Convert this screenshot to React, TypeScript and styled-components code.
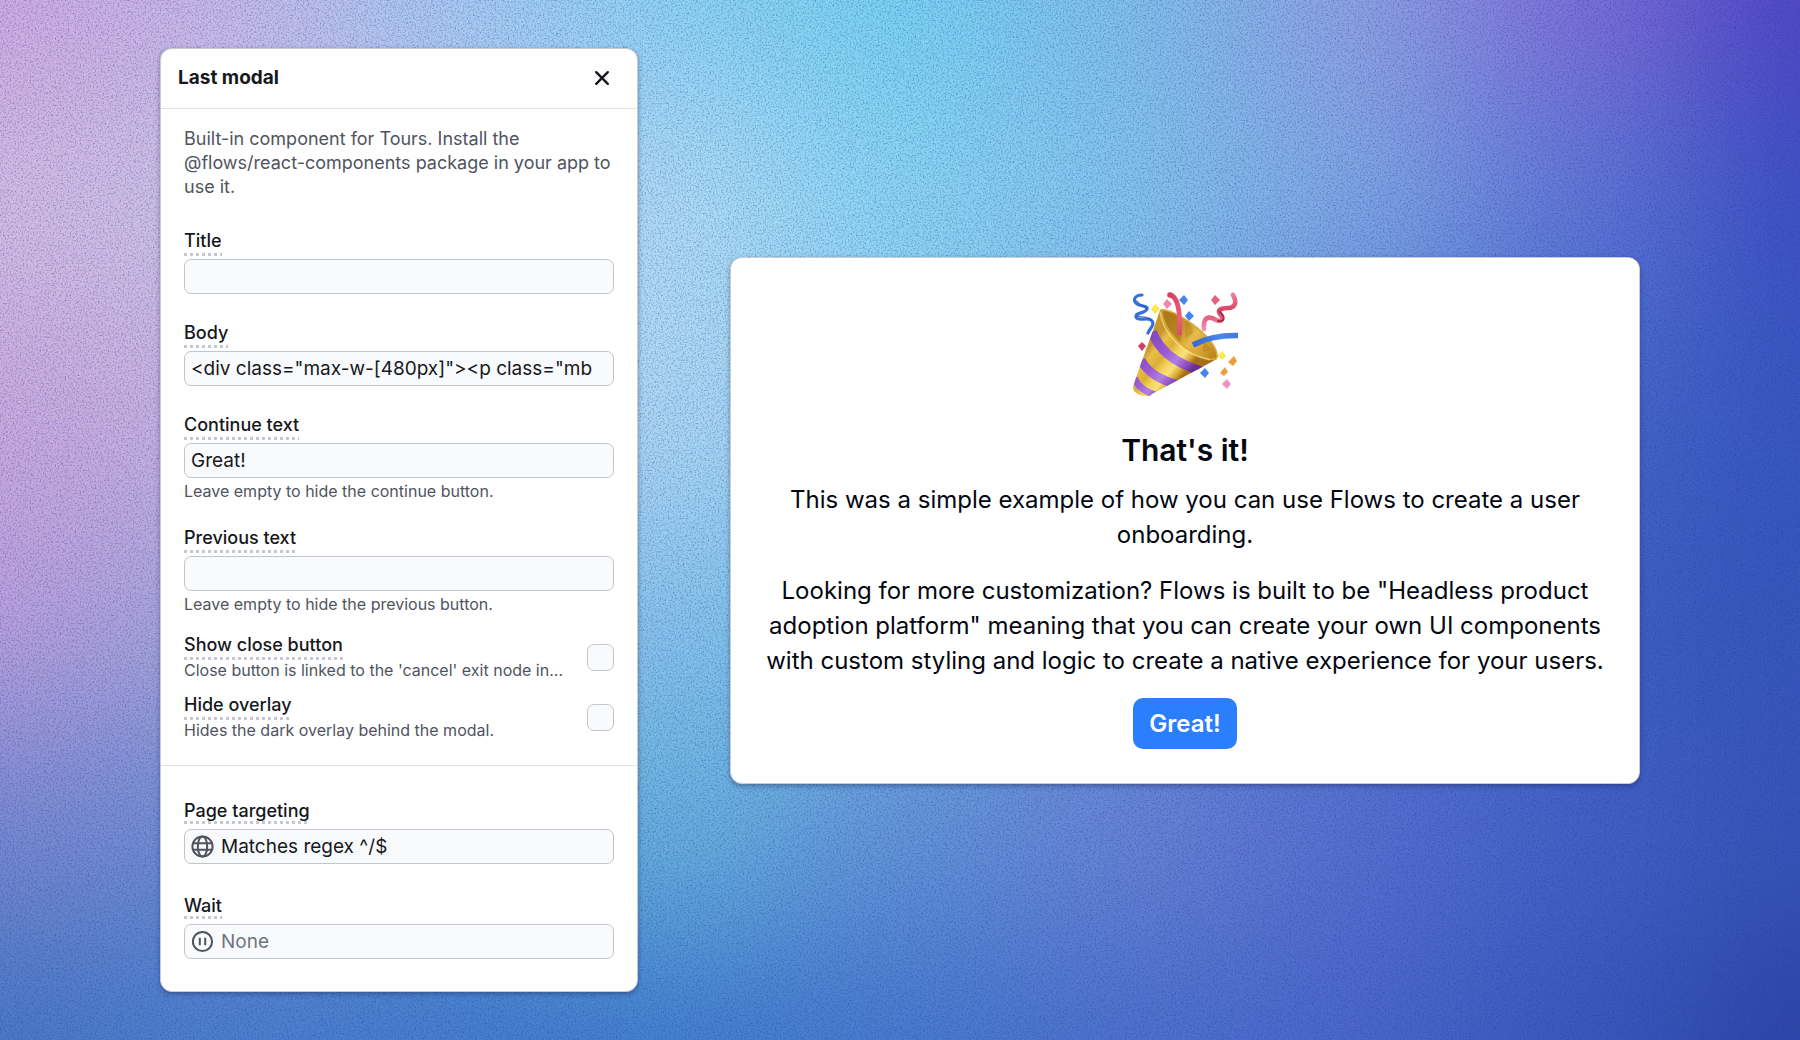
import React, { useId, useState } from "react";
import styled, { createGlobalStyle } from "styled-components";

const GlobalStyle = createGlobalStyle`
  *, *::before, *::after { box-sizing: border-box; }
  html, body, #root { min-height: 100vh; }
  body { margin: 0; font-family: Inter, "Liberation Sans", sans-serif; color: #16181d; }
  button, input { font: inherit; color: inherit; }
  p, h1, h2 { margin: 0; }
`;

const Page = styled.div`
  display: grid;
  min-height: 100vh;
`;

const Backdrop = styled.svg`
  grid-area: 1 / 1;
  width: 100%;
  height: 100%;
  min-height: 0;
  contain: size;
`;

const Stage = styled.main`
  grid-area: 1 / 1;
  z-index: 1;
  display: grid;
  grid-template-columns: 478px minmax(0, 910px);
  justify-content: center;
  align-items: center;
  gap: 92px;
  padding: 48px 160px;
`;

const Card = styled.section`
  background: #fff;
  border: 1px solid #c8ccd4;
  border-radius: 12px;
  box-shadow: 0 2px 5px rgba(20, 30, 70, 0.4);
`;

const Header = styled.header`
  display: flex;
  align-items: center;
  justify-content: space-between;
  height: 60px;
  padding: 0 20px 1px 17px;
  border-bottom: 1px solid #dfe2e8;
`;

const PanelTitle = styled.h2`
  font-size: 19px;
  line-height: 24px;
  font-weight: 700;
`;

const CloseButton = styled.button`
  display: grid;
  place-items: center;
  width: 30px;
  height: 30px;
  padding: 0;
  border: 0;
  border-radius: 6px;
  background: none;
  cursor: pointer;
`;

const Settings = styled.div`
  padding: 18px 23px 24px;
`;

const Targeting = styled.div`
  display: flex;
  flex-direction: column;
  gap: 28px;
  padding: 34px 23px 29px;
  border-top: 1px solid #dfe2e8;
`;

const Description = styled.p`
  padding-bottom: 30px;
  font-size: 18px;
  line-height: 24px;
  color: #50545f;
`;

const FieldList = styled.div`
  display: flex;
  flex-direction: column;
  gap: 24px;
`;

const ToggleList = styled.div`
  display: flex;
  flex-direction: column;
  gap: 12px;
  margin-top: 18px;
`;

const FieldRoot = styled.div`
  display: flex;
  flex-direction: column;
  align-items: stretch;
`;

const Label = styled.label<{ $tight?: boolean }>`
  align-self: flex-start;
  padding-bottom: 3px;
  font-size: 18px;
  line-height: ${(p) => (p.$tight ? 21 : 24)}px;
  font-weight: 500;
  background: repeating-linear-gradient(90deg, #c4c8d1 0 3px, transparent 3px 6px) left bottom / 100% 3px no-repeat;
`;

const Control = styled.div<{ $tight?: boolean }>`
  display: flex;
  align-items: center;
  gap: 7px;
  height: 35px;
  margin: ${(p) => (p.$tight ? 5 : 3)}px 0 3px;
  padding: 0 6px;
  border: 1px solid #c1c5ce;
  border-radius: 7px;
  background: #f9fafc;
  color: #50545f;
  &:focus-within { border-color: #2b7fff; }
`;

const TextInput = styled.input`
  flex: 1;
  min-width: 0;
  padding: 0;
  border: 0;
  outline: 0;
  background: none;
  color: #16181d;
  font-size: 19px;
  line-height: 24px;
  &::placeholder { color: #6f7480; opacity: 1; }
`;

const Help = styled.p`
  font-size: 16px;
  line-height: 21px;
  color: #50545f;
`;

const ToggleRow = styled.div`
  display: flex;
  align-items: center;
  justify-content: space-between;
  gap: 8px;
`;

const ToggleText = styled.div`
  display: flex;
  flex-direction: column;
  min-width: 0;
`;

const Checkbox = styled.input`
  appearance: none;
  flex: none;
  width: 27px;
  height: 27px;
  margin: 0;
  border: 1px solid #c1c5ce;
  border-radius: 7px;
  background: #f9fafc;
  &:checked { background: #2b7fff; border-color: #2b7fff; }
`;

const Modal = styled(Card)`
  display: flex;
  flex-direction: column;
  align-items: center;
  padding: 34px 32px;
  color: #030712;
  text-align: center;
`;

const ModalTitle = styled.h1`
  margin-top: 34px;
  font-size: 30px;
  line-height: 38px;
  font-weight: 600;
`;

const ModalText = styled.p<{ $gap: number }>`
  margin-top: ${(p) => p.$gap}px;
  font-size: 24px;
  line-height: 35px;
`;

const PrimaryButton = styled.button`
  height: 51px;
  margin-top: 20px;
  padding: 0 16px;
  border: 0;
  border-radius: 10px;
  background: #2b7fff;
  color: #fff;
  font-size: 24px;
  line-height: 35px;
  font-weight: 600;
  cursor: pointer;
`;

/* Colour mesh: each row holds the tones from left to right. */
const mesh: string[][] = [
  ["#d0a8e0", "#c8b8e6", "#a8c8f0", "#8cd2f2", "#78d2f0", "#80c0ea", "#90a2e2", "#8070d8", "#5046c4"],
  ["#d4bee2", "#ccc2e4", "#b4ccee", "#b2dcf4", "#8cd6f4", "#84c6ec", "#80a8e4", "#6078d6", "#3c50c2"],
  ["#cca8dc", "#c8b4e0", "#acc4e8", "#b0daf4", "#90c8ec", "#80b0e4", "#6488d6", "#4868cc", "#3856be"],
  ["#bca0dc", "#a4a4d8", "#90b4e4", "#88c6ec", "#74b4e0", "#648cd8", "#5474d0", "#4060c6", "#3656bc"],
  ["#7888d0", "#708cd2", "#60a0d4", "#68b4de", "#6494d8", "#6a84d4", "#5870d0", "#4462c6", "#3854b8"],
  ["#4876c2", "#4a7ecc", "#447acc", "#427ccc", "#4678cc", "#4c70cc", "#4a66c8", "#3a58be", "#2c44a4"],
];

function GradientBackdrop() {
  const cols = mesh[0].length;
  const rows = mesh.length;
  const w = 1800 / (cols - 1);
  const h = 1040 / (rows - 1);
  return (
    <Backdrop viewBox="0 0 1800 1040" preserveAspectRatio="none" aria-hidden="true">
      <defs>
        <filter id="soften" filterUnits="userSpaceOnUse" x="-400" y="-400" width="2600" height="1840" colorInterpolationFilters="sRGB">
          <feGaussianBlur stdDeviation="80" />
        </filter>
        <filter id="grain" filterUnits="userSpaceOnUse" x="0" y="0" width="1800" height="1040" colorInterpolationFilters="sRGB">
          <feTurbulence type="fractalNoise" baseFrequency="0.6" numOctaves="2" seed="4" />
          <feColorMatrix values="0 0 0 0 0.1  0 0 0 0 0.22  0 0 0 0 0.6  2.4 0 0 0 -1.1" />
        </filter>
      </defs>
      <g filter="url(#soften)">
        {mesh.map((row, r) =>
          row.map((fill, c) => {
            const left = c === 0 ? -400 : (c - 0.5) * w;
            const right = c === cols - 1 ? 2200 : (c + 0.5) * w;
            const top = r === 0 ? -400 : (r - 0.5) * h;
            const bottom = r === rows - 1 ? 1440 : (r + 0.5) * h;
            return <rect key={`${r}-${c}`} x={left} y={top} width={right - left + 1} height={bottom - top + 1} fill={fill} />;
          })
        )}
      </g>
      <rect width="1800" height="1040" filter="url(#grain)" opacity="0.4" />
    </Backdrop>
  );
}

const CloseIcon = () => (
  <svg width="16" height="16" viewBox="0 0 16 16" fill="none" stroke="#16181d" strokeWidth="2.4" strokeLinecap="round" aria-hidden="true">
    <path d="M2.2 2.2 13.8 13.8M13.8 2.2 2.2 13.8" />
  </svg>
);

const GlobeIcon = () => (
  <svg width="23" height="23" viewBox="0 0 23 23" fill="none" stroke="currentColor" strokeWidth="2" aria-hidden="true">
    <circle cx="11.5" cy="11.5" r="10.1" />
    <ellipse cx="11.5" cy="11.5" rx="4.7" ry="10.1" />
    <path d="M2.2 8.2h18.6M2.2 14.8h18.6" />
  </svg>
);

const PauseIcon = () => (
  <svg width="23" height="23" viewBox="0 0 23 23" fill="none" stroke="currentColor" strokeWidth="2" aria-hidden="true">
    <circle cx="11.5" cy="11.5" r="9.6" />
    <path d="M8.8 7.8v7.4M14.2 7.8v7.4" />
  </svg>
);

const PartyPopper = () => (
  <svg width="105" height="105" viewBox="0 0 105 105" role="img" aria-label="Party popper">
    <defs>
      <linearGradient id="gold" x1="12" y1="60" x2="46" y2="88" gradientUnits="userSpaceOnUse">
        <stop offset="0" stopColor="#c8962c" />
        <stop offset="0.15" stopColor="#e8bf48" />
        <stop offset="0.38" stopColor="#dcae38" />
        <stop offset="0.55" stopColor="#f2d25c" />
        <stop offset="0.72" stopColor="#f8e27a" />
        <stop offset="0.88" stopColor="#d8a836" />
        <stop offset="1" stopColor="#a47018" />
      </linearGradient>
      <linearGradient id="inside" x1="32" y1="24" x2="84" y2="62" gradientUnits="userSpaceOnUse">
        <stop offset="0" stopColor="#b5821c" />
        <stop offset="0.35" stopColor="#c99428" />
        <stop offset="0.55" stopColor="#e6bc4c" />
        <stop offset="0.75" stopColor="#d6a434" />
        <stop offset="1" stopColor="#b9841c" />
      </linearGradient>
      <linearGradient id="violet" x1="10" y1="56" x2="48" y2="90" gradientUnits="userSpaceOnUse">
        <stop offset="0" stopColor="#8648c4" />
        <stop offset="0.4" stopColor="#9a5cd4" />
        <stop offset="0.65" stopColor="#b080e2" />
        <stop offset="0.85" stopColor="#8e50c4" />
        <stop offset="1" stopColor="#6a2f94" />
      </linearGradient>
      <linearGradient id="rose" x1="0" y1="0" x2="0" y2="1">
        <stop offset="0" stopColor="#f07c96" />
        <stop offset="0.45" stopColor="#d84464" />
        <stop offset="1" stopColor="#f490a8" />
      </linearGradient>
      <linearGradient id="stem" x1="36" y1="0" x2="48" y2="44" gradientUnits="userSpaceOnUse">
        <stop offset="0" stopColor="#d8405f" />
        <stop offset="0.6" stopColor="#ec5f7e" />
        <stop offset="1" stopColor="#d8486a" />
      </linearGradient>
      <linearGradient id="azure" x1="60" y1="0" x2="105" y2="0" gradientUnits="userSpaceOnUse">
        <stop offset="0" stopColor="#3468cc" />
        <stop offset="0.6" stopColor="#4a84ee" />
        <stop offset="1" stopColor="#3e78e0" />
      </linearGradient>
      <clipPath id="cone">
        <path d="M27 18C20 40 8 70 0 95c0 6 8 10 15 9 2 0 3-1 4-2L84 67C70 40 40 20 27 18Z" />
      </clipPath>
    </defs>
    <path d="M27 18C20 40 8 70 0 95c0 6 8 10 15 9 2 0 3-1 4-2L84 67C70 40 40 20 27 18Z" fill="url(#gold)" />
    <g clipPath="url(#cone)" fill="none" stroke="url(#violet)">
      <path d="M19 40c7 16 18 30 52 40" strokeWidth="9.5" />
      <path d="M8 68c6 12 18 20 38 25" strokeWidth="9" />
      <path d="M1 86c4 9 11 14 24 18" strokeWidth="7" />
    </g>
    <path d="M28 18c13-2 52 25 56 44 1 5-2 6-8 5C50 60 30 38 28 18Z" fill="url(#inside)" />
    <path d="M31 20c1 12 8 22 17 31l1-26c-6-4-12-6-18-5Z" fill="#8f6210" opacity="0.28" />
    <path d="M53 29c5 3 7 8 7 12l-8 6Zm18 20 8 9-10 2Z" fill="#a87818" opacity="0.35" />
    <path d="M28 18c13-2 52 25 56 44 1 5-2 6-8 5C50 60 30 38 28 18Z" fill="none" stroke="#d9aa38" strokeWidth="1.6" />
    <path d="M27 20c3 22 22 42 50 48" fill="none" stroke="#f8e38a" strokeWidth="1.2" opacity="0.8" />
    <path d="M9 3C2 3-1 8 4 12c4 3 11 1 10 5-2 5-12 3-11 8 2 5 10 0 15 3 5 4-1 8-3 13" fill="none" stroke="#3670e0" strokeWidth="3.2" strokeLinecap="round" />
    <path d="M4 9c3 5 8 5 10 8M4 24c5 2 10-1 14 4" fill="none" stroke="#2550a8" strokeWidth="1.4" strokeLinecap="round" opacity="0.7" />
    <path d="M37 3c7 1 11 15 9.500 40" fill="none" stroke="url(#stem)" strokeWidth="4.8" />
    <path d="M37 3h.1" stroke="#d8405f" strokeWidth="5.6" strokeLinecap="round" />
    <path d="M60 53c11-6 24-10 46-9.500" fill="none" stroke="url(#azure)" strokeWidth="5.6" />
    <path d="M100 3c5 8 1 13-5 13-7 0-11 2-8 6 4 4 2 9-4 6-8-5-13-2-12 9" fill="none" stroke="url(#rose)" strokeWidth="4.6" strokeLinecap="round" />
    <path d="M87 20c6 6 4 10-2 9" fill="none" stroke="#a82c48" strokeWidth="1.8" strokeLinecap="round" />
    <g fill="#4285ee">
      <path d="m51 3 4 5-4 5-5-5Z" />
      <path d="m56 19 5 5-5 5-4-5Z" />
      <path d="m72 76 4 5-4 5-5-5Z" />
    </g>
    <path d="m22 12 5 5-5 5-4-5Zm67 47 4 5-4 4-4-4Z" fill="#fbe84a" />
    <path d="m34 7 5 5-5 5-4-5Z" fill="#f08aac" />
    <path d="m82 3 5 5-5 5-4-5Z" fill="#e4607e" />
    <path d="m9 50 4 4-4 5-4-5Z" fill="#cf3f5c" />
    <path d="m101 64 3 5-4 5-5-4ZM92 75l3 5-4 4-4-3Z" fill="#ee9c40" />
    <path d="m94 87 4 5-4 5-5-5Z" fill="#f093c4" />
  </svg>
);

interface FieldProps {
  label: string;
  value?: string;
  placeholder?: string;
  help?: string;
  icon?: React.ReactNode;
  tight?: boolean;
}

function Field({ label, value = "", placeholder, help, icon, tight }: FieldProps) {
  const id = useId();
  const [text, setText] = useState(value);
  return (
    <FieldRoot>
      <Label htmlFor={id} $tight={tight}>{label}</Label>
      <Control $tight={tight}>
        {icon}
        <TextInput id={id} type="text" value={text} placeholder={placeholder} onChange={(e) => setText(e.target.value)} />
      </Control>
      {help && <Help>{help}</Help>}
    </FieldRoot>
  );
}

function Toggle({ label, help }: { label: string; help: string }) {
  const id = useId();
  return (
    <ToggleRow>
      <ToggleText>
        <Label htmlFor={id}>{label}</Label>
        <Help>{help}</Help>
      </ToggleText>
      <Checkbox id={id} type="checkbox" />
    </ToggleRow>
  );
}

export default function App() {
  return (
    <Page>
      <GlobalStyle />
      <GradientBackdrop />
      <Stage>
        <Card>
          <Header>
            <PanelTitle>Last modal</PanelTitle>
            <CloseButton type="button" aria-label="Close">
              <CloseIcon />
            </CloseButton>
          </Header>
          <Settings>
            <Description>
              Built-in component for Tours. Install the @flows/react-components package in your app to use it.
            </Description>
            <FieldList>
              <Field label="Title" />
              <Field label="Body" value={'<div class="max-w-[480px]"><p class="mb'} />
              <Field label="Continue text" value="Great!" help="Leave empty to hide the continue button." />
              <Field label="Previous text" help="Leave empty to hide the previous button." />
            </FieldList>
            <ToggleList>
              <Toggle label="Show close button" help="Close button is linked to the 'cancel' exit node in..." />
              <Toggle label="Hide overlay" help="Hides the dark overlay behind the modal." />
            </ToggleList>
          </Settings>
          <Targeting>
            <Field tight label="Page targeting" value="Matches regex ^/$" icon={<GlobeIcon />} />
            <Field tight label="Wait" placeholder="None" icon={<PauseIcon />} />
          </Targeting>
        </Card>
        <Modal as="article">
          <PartyPopper />
          <ModalTitle>That's it!</ModalTitle>
          <ModalText $gap={13}>This was a simple example of how you can use Flows to create a user onboarding.</ModalText>
          <ModalText $gap={21}>
            Looking for more customization? Flows is built to be "Headless product adoption platform" meaning that you can
            create your own UI components with custom styling and logic to create a native experience for your users.
          </ModalText>
          <PrimaryButton type="button">Great!</PrimaryButton>
        </Modal>
      </Stage>
    </Page>
  );
}
